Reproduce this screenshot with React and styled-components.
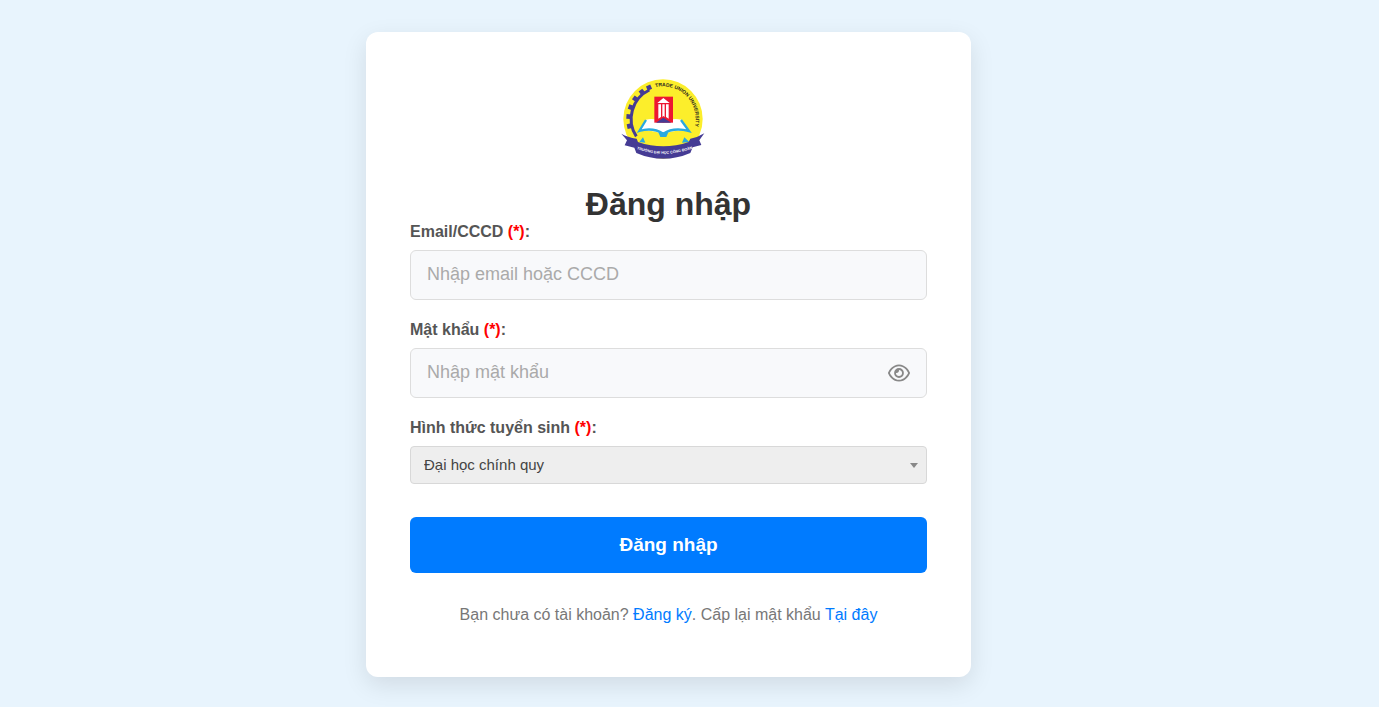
import React, { useState } from "react";
import styled, { createGlobalStyle } from "styled-components";
import { FaRegEye } from "react-icons/fa6";

const GlobalStyle = createGlobalStyle`
  *, *::before, *::after { box-sizing: border-box; }
  body {
    margin: 0;
    background: #e8f4fd;
    font-family: "Liberation Sans", Arial, sans-serif;
    font-size: 16px;
    line-height: 20px;
    color: #333;
  }
`;

const Page = styled.main`
  display: flex;
  justify-content: center;
  min-height: 100vh;
  padding: 32px 42px 30px 0;
`;

const Card = styled.section`
  width: 100%;
  max-width: 605px;
  align-self: flex-start;
  padding: 44px 44px 52px;
  background: #fff;
  border-radius: 12px;
  box-shadow: 0 8px 24px rgba(0, 0, 0, 0.1);
`;

const Logo = styled.svg`
  display: block;
  width: 118px;
  height: 84px;
  margin: 0 auto 26px;
`;

const Title = styled.h1`
  margin: 0;
  font-size: 32px;
  line-height: 36px;
  text-align: center;
`;

const Form = styled.form`
  display: flex;
  flex-direction: column;
  gap: 20px;
`;

const Field = styled.div`
  display: flex;
  flex-direction: column;
  gap: 8px;
`;

const Label = styled.label`
  font-weight: bold;
  color: #555;
`;

const Required = styled.span`
  color: #f00;
`;

const Control = styled.div`
  position: relative;
`;

const TextInput = styled.input`
  display: block;
  width: 100%;
  height: 50px;
  padding: 0 16px 2px;
  border: 1px solid #ddd;
  border-radius: 6px;
  background: #f8f9fb;
  color: #333;
  font-family: inherit;
  font-size: 18px;

  &::placeholder { color: #aaa; opacity: 1; }
`;

const RevealButton = styled.button`
  position: absolute;
  top: 0;
  right: 17px;
  height: 100%;
  display: flex;
  align-items: center;
  padding: 0;
  border: 0;
  background: none;
  color: #888;
  cursor: pointer;

  svg { width: 22px; height: 20px; }
`;

const Select = styled.select`
  appearance: none;
  display: block;
  width: 100%;
  height: 38px;
  padding: 0 32px 2px 13px;
  border: 1px solid #d8d8d8;
  border-radius: 4px;
  background: #eee;
  color: #444;
  font-family: inherit;
  font-size: 15px;
`;

const Caret = styled.svg`
  position: absolute;
  top: 17px;
  right: 9px;
  width: 8px;
  height: 5px;
  fill: #888;
  pointer-events: none;
`;

const SubmitButton = styled.button`
  height: 56px;
  margin-top: 13px;
  padding: 0;
  border: 0;
  border-radius: 6px;
  background: #007bff;
  color: #fff;
  font-family: inherit;
  font-size: 19px;
  font-weight: bold;
  cursor: pointer;
`;

const Footer = styled.p`
  margin: 32px 0 0;
  text-align: center;
  color: #777;
`;

const Link = styled.a`
  color: #007bff;
  text-decoration: none;
`;

const teeth = [-102, -86, -70, -54, -38, -24];

function UniversityLogo() {
  return (
    <Logo viewBox="0 18 354 252" role="img" aria-label="Trade Union University">
      <defs>
        <path id="topArc" d="M61 147 A98 98 0 0 1 257 147 A98 98 0 0 1 230 214" />
        <path id="ribbonArc" d="M76 235 Q160 268 252 234" />
      </defs>
      <circle cx="159" cy="147" r="119" fill="#fcee2b" />
      <path d="M79 199 A96 96 0 0 1 118 60" fill="none" stroke="#453b94" strokeWidth="9" />
      {teeth.map((angle) => (
        <rect
          key={angle}
          x="152"
          y="37"
          width="14"
          height="14"
          fill="#453b94"
          transform={`rotate(${angle} 159 147)`}
        />
      ))}
      <text fontSize="15" fontWeight="bold" fill="#26221e">
        <textPath href="#topArc" startOffset="131">TRADE UNION UNIVERSITY</textPath>
      </text>
      <path d="M108 149 Q137 143 160 159 Q183 143 214 149 L240 185 Q192 176 160 194 Q125 176 84 185 Z" fill="#fff" />
      <path d="M108 150 L88 183 Q128 171 160 191 Q190 171 237 183 L213 150" fill="none" stroke="#29a9df" strokeWidth="7" />
      <path d="M145 187 L175 187 L169 201 L151 201 Z" fill="#29a9df" />
      <rect x="133" y="80" width="56" height="78" fill="#ed1731" />
      <path d="M142 99 L160 84 L179 99 Z M145 103 H153 V141 L145 146 Z M157 103 H164 V141 L160 138 L157 141 Z M168 103 H176 V146 L168 141 Z" fill="#fff" />
      <path d="M138 158 L160 143 L184 158 Z" fill="#453b94" />
      <path d="M88 216 L99 202 L106 218 Z M216 218 L223 202 L238 216 Z" fill="#29a9df" />
      <path d="M34 191 Q53 202 80 206 L84 216 Q160 242 236 216 L241 206 Q264 202 283 190 L268 211 L274 225 L248 232 L241 249 Q160 284 79 249 L73 233 L44 226 L51 211 Z" fill="#453b94" />
      <text fontSize="11" fontWeight="bold" fill="#fff" textAnchor="middle">
        <textPath href="#ribbonArc" startOffset="50%">TRƯỜNG ĐẠI HỌC CÔNG ĐOÀN</textPath>
      </text>
    </Logo>
  );
}

function FieldLabel({ htmlFor, children }) {
  return (
    <Label htmlFor={htmlFor}>
      {children} <Required>(*)</Required>:
    </Label>
  );
}

export default function App() {
  const [visible, setVisible] = useState(false);

  return (
    <>
      <GlobalStyle />
      <Page>
        <Card>
          <UniversityLogo />
          <Title>Đăng nhập</Title>
          <Form onSubmit={(event) => event.preventDefault()}>
            <Field>
              <FieldLabel htmlFor="account">Email/CCCD</FieldLabel>
              <TextInput id="account" type="text" placeholder="Nhập email hoặc CCCD" />
            </Field>
            <Field>
              <FieldLabel htmlFor="password">Mật khẩu</FieldLabel>
              <Control>
                <TextInput
                  id="password"
                  type={visible ? "text" : "password"}
                  placeholder="Nhập mật khẩu"
                />
                <RevealButton
                  type="button"
                  aria-label="Hiện mật khẩu"
                  aria-pressed={visible}
                  onClick={() => setVisible(!visible)}
                >
                  <FaRegEye />
                </RevealButton>
              </Control>
            </Field>
            <Field>
              <FieldLabel htmlFor="admission">Hình thức tuyển sinh</FieldLabel>
              <Control>
                <Select id="admission" defaultValue="regular">
                  <option value="regular">Đại học chính quy</option>
                </Select>
                <Caret viewBox="0 0 8 5" aria-hidden="true">
                  <path d="M0 0 H8 L4 5 Z" />
                </Caret>
              </Control>
            </Field>
            <SubmitButton type="submit">Đăng nhập</SubmitButton>
          </Form>
          <Footer>
            Bạn chưa có tài khoản? <Link href="#register">Đăng ký</Link>. Cấp lại mật khẩu{" "}
            <Link href="#reset">Tại đây</Link>
          </Footer>
        </Card>
      </Page>
    </>
  );
}
